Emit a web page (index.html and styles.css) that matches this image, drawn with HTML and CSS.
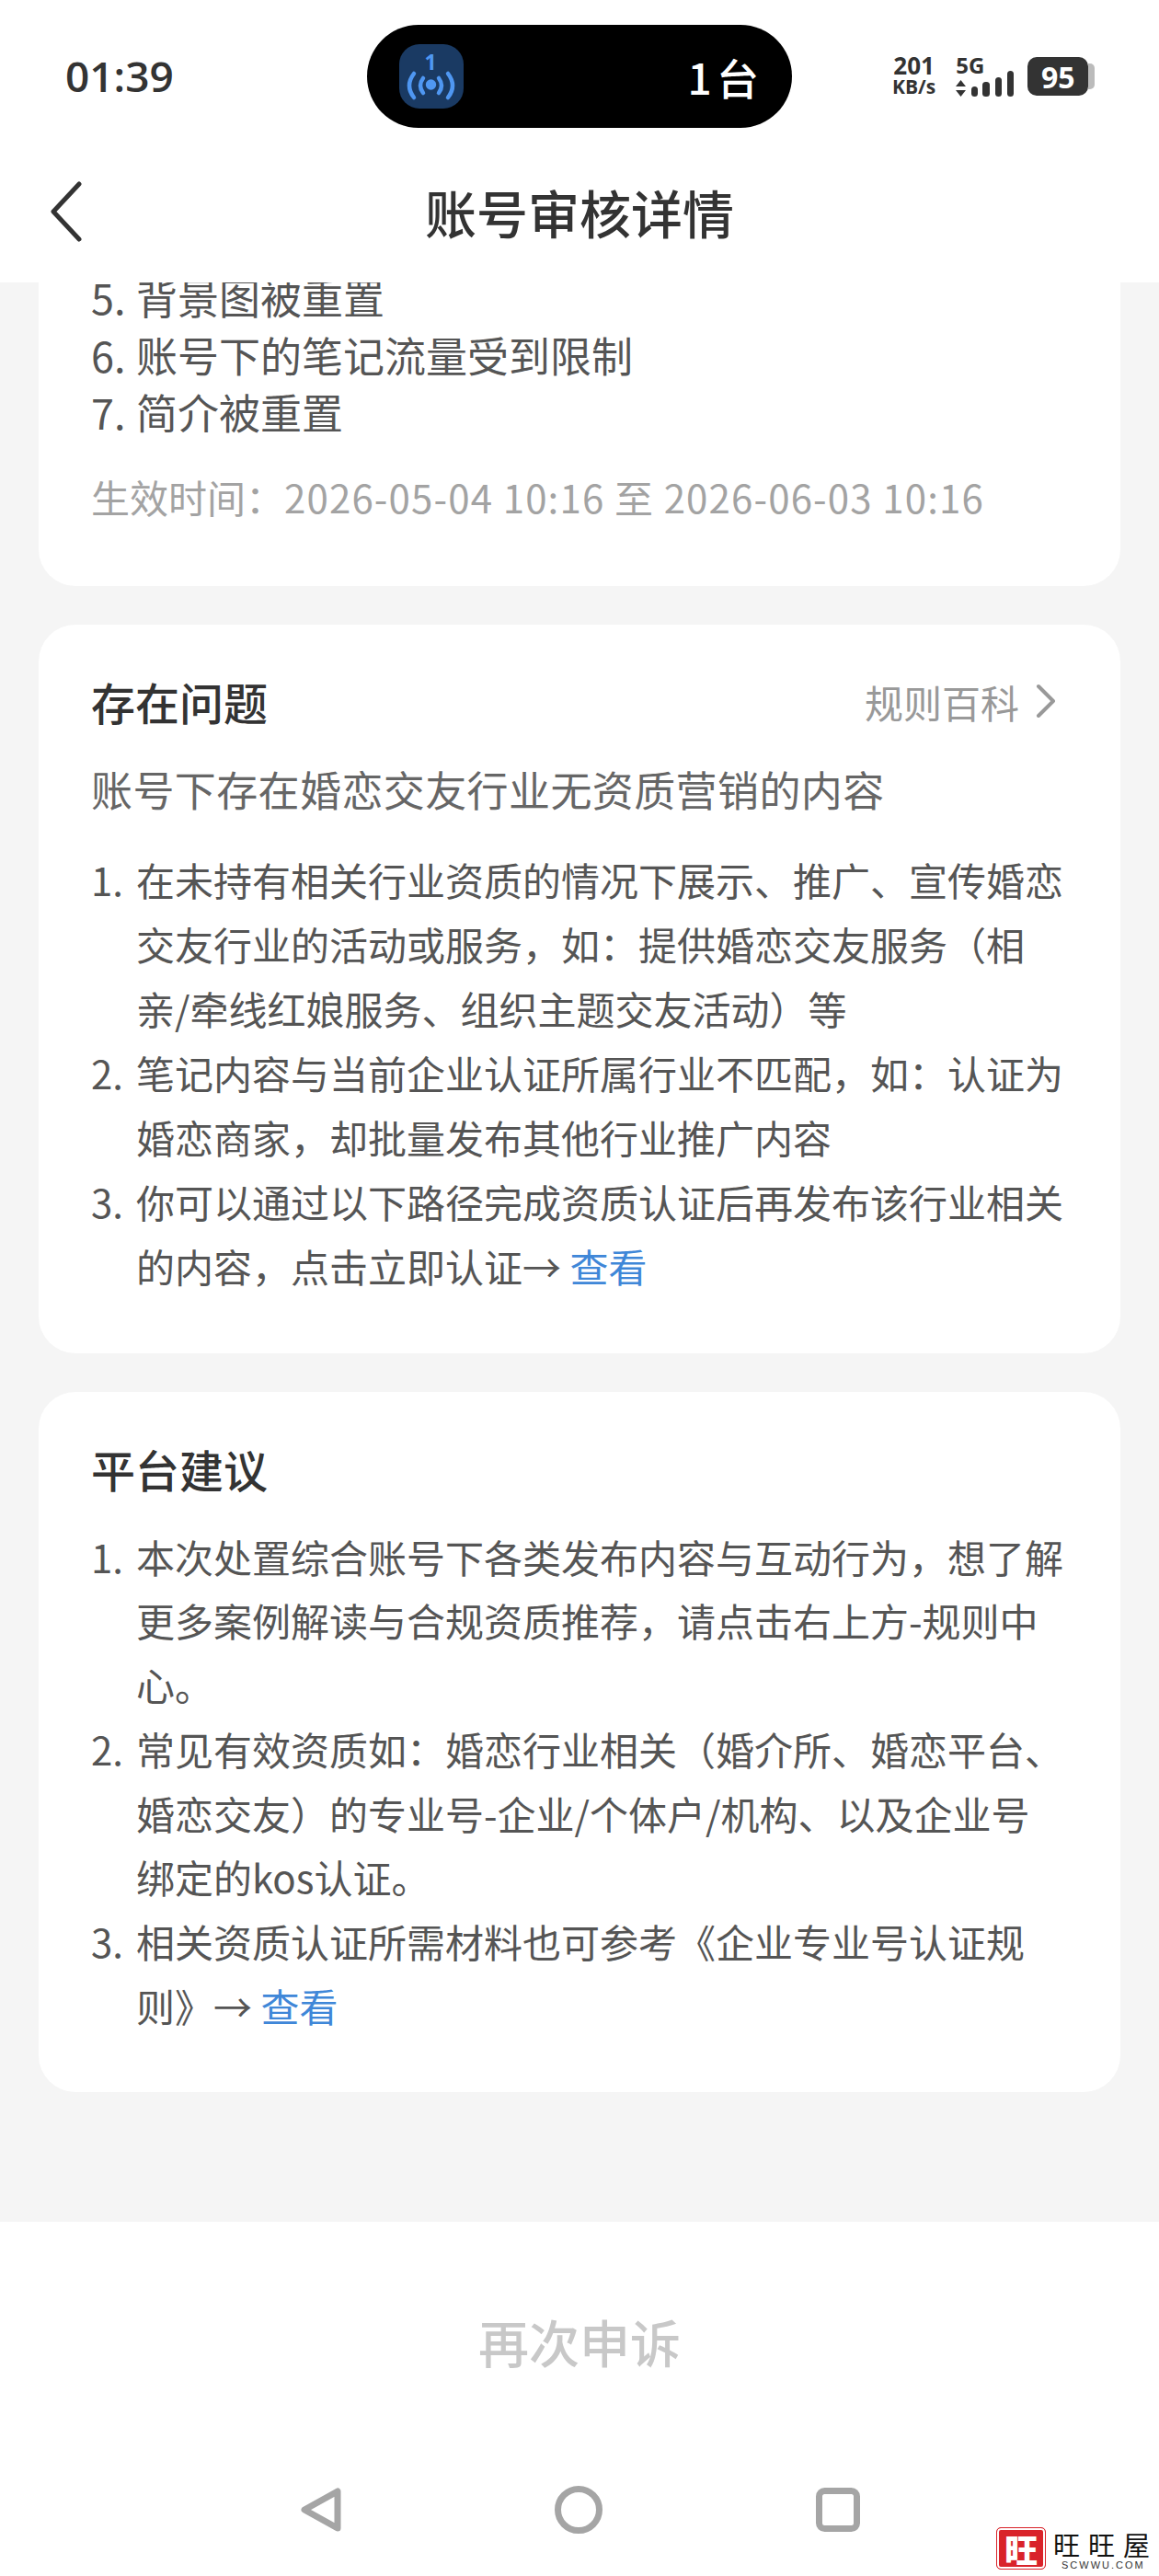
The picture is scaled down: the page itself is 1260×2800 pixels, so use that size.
FILE: index.html
```html
<!DOCTYPE html>
<html lang="zh-CN">
<head>
    <meta charset="UTF-8">
    <meta name="viewport" content="width=device-width, initial-scale=1.0">
    <title>账号审核详情</title>
    <link rel="stylesheet" href="styles.css">
</head>
<body>
<div class="page">

    <header class="topo">
        <div class="status-bar">
            <span class="hora">01:39</span>
            <div class="pilula">
                <span class="pilula-icone">
                    <svg width="70" height="70" viewBox="0 0 70 70" fill="none" stroke="#4f97f2" stroke-width="4.5" stroke-linecap="round">
                        <text x="34" y="28" class="pilula-num" text-anchor="middle">1</text>
                        <circle cx="34.5" cy="44" r="5.7" fill="#4f97f2" stroke="none"/>
                        <path d="M26 37 Q20 45 26 53"/>
                        <path d="M43 37 Q49 45 43 53"/>
                        <path d="M16 32 Q6 45 16 58"/>
                        <path d="M53 32 Q63 45 53 58"/>
                    </svg>
                </span>
                <span class="pilula-texto">1 台</span>
            </div>
            <div class="status-dir">
                <div class="rede">
                    <span class="rede-num">201</span>
                    <span class="rede-un">KB/s</span>
                </div>
                <div class="sinal">
                    <span class="sinal-5g">5G</span>
                    <svg width="64" height="30" viewBox="0 0 64 30" fill="#333">
                        <path d="M0 13 L5.5 6 L11 13 Z"/>
                        <path d="M0 17 L5.5 24 L11 17 Z"/>
                        <rect x="17" y="13" width="7" height="11" rx="3.5"/>
                        <rect x="29" y="8" width="8" height="16" rx="3.5"/>
                        <rect x="43" y="3" width="7" height="21" rx="3.5"/>
                        <rect x="56" y="-4" width="7" height="28" rx="3.5"/>
                    </svg>
                </div>
                <div class="bateria"><span class="bateria-num">95</span></div>
            </div>
        </div>
        <div class="nav">
            <svg class="nav-voltar" width="36" height="66" viewBox="0 0 36 66" fill="none" stroke="#333" stroke-width="5" stroke-linecap="round" stroke-linejoin="round">
                <path d="M32 3 L4 33 L32 63"/>
            </svg>
            <h1 class="nav-titulo">账号审核详情</h1>
        </div>
    </header>

    <main class="conteudo">
        <section class="card card-cortado">
            <ol class="lista lista-curta">
                <li><span class="num">5.</span><span>背景图被重置</span></li>
                <li><span class="num">6.</span><span>账号下的笔记流量受到限制</span></li>
                <li><span class="num">7.</span><span>简介被重置</span></li>
            </ol>
            <p class="vigencia">生效时间：<span class="datas">2026-05-04 10:16 至 2026-06-03 10:16</span></p>
        </section>

        <section class="card">
            <div class="card-topo">
                <h2>存在问题</h2>
                <a class="regras">规则百科
                    <svg width="22" height="38" viewBox="0 0 22 38" fill="none" stroke="#999" stroke-width="4" stroke-linecap="round" stroke-linejoin="round">
                        <path d="M3 3 L19 19 L3 35"/>
                    </svg>
                </a>
            </div>
            <p class="resumo">账号下存在婚恋交友行业无资质营销的内容</p>
            <ol class="lista">
                <li><span class="num">1.</span><span>在未持有相关行业资质的情况下展示、推广、宣传婚恋交友行业的活动或服务，如：提供婚恋交友服务（相亲/牵线红娘服务、组织主题交友活动）等</span></li>
                <li><span class="num">2.</span><span>笔记内容与当前企业认证所属行业不匹配，如：认证为婚恋商家，却批量发布其他行业推广内容</span></li>
                <li><span class="num">3.</span><span>你可以通过以下路径完成资质认证后再发布该行业相关的内容，点击立即认证→ <a class="link">查看</a></span></li>
            </ol>
        </section>

        <section class="card card-sugestao">
            <div class="card-topo">
                <h2>平台建议</h2>
            </div>
            <ol class="lista lista-sugestao">
                <li><span class="num">1.</span><span>本次处置综合账号下各类发布内容与互动行为，想了解更多案例解读与合规资质推荐，请点击右上方-规则中心。</span></li>
                <li><span class="num">2.</span><span>常见有效资质如：婚恋行业相关（婚介所、婚恋平台、婚恋交友）的专业号-企业/个体户/机构、以及企业号绑定的kos认证。</span></li>
                <li><span class="num">3.</span><span>相关资质认证所需材料也可参考《企业专业号认证规则》→ <a class="link">查看</a></span></li>
            </ol>
        </section>
    </main>

    <footer class="rodape">
        <button class="botao">再次申诉</button>
        <div class="nav-sistema">
            <svg width="44" height="48" viewBox="0 0 44 48" fill="none" stroke="#a5a5a5" stroke-width="7" stroke-linejoin="round">
                <path d="M40 4 L40 44 L4 24 Z"/>
            </svg>
            <svg width="52" height="52" viewBox="0 0 52 52" fill="none" stroke="#a5a5a5" stroke-width="7">
                <circle cx="26" cy="26" r="22.5"/>
            </svg>
            <svg width="48" height="48" viewBox="0 0 48 48" fill="none" stroke="#a5a5a5" stroke-width="7">
                <rect x="3.5" y="3.5" width="41" height="41" rx="6"/>
            </svg>
        </div>
    </footer>

    <div class="marca">
        <span class="marca-selo">旺</span>
        <div class="marca-texto">
            <span class="marca-nome">旺旺屋</span>
            <span class="marca-site">SCWWU.COM</span>
        </div>
    </div>
</div>
</body>
</html>
```

FILE: styles.css
```css
/* Base */
body {
    margin: 0;
    background-color: #f5f5f5;
    font-family: "Noto Sans CJK SC", "Noto Sans", sans-serif;
}

.page {
    position: relative;
    width: 1260px;
    height: 2800px;
    display: flex;
    flex-direction: column;
    overflow: hidden;
}

/* Topo */
.topo {
    height: 307px;
    flex-shrink: 0;
    background-color: #fff;
}

.status-bar {
    display: grid;
    grid-template-columns: 1fr auto 1fr;
    align-items: center;
    height: 112px;
    padding: 27px 0 0;
}

.hora {
    padding-left: 71px;
    font-family: "Open Sans", sans-serif;
    font-size: 46px;
    font-weight: 600;
    line-height: 60px;
    margin-top: -3px;
    color: #333;
}

.pilula {
    display: flex;
    align-items: center;
    justify-content: space-between;
    box-sizing: border-box;
    width: 462px;
    height: 112px;
    padding: 0 36px 0 35px;
    border-radius: 56px;
    background-color: #000;
}

.pilula-icone {
    display: block;
    width: 70px;
    height: 70px;
    border-radius: 22px;
    background-color: #1a3a63;
}

.pilula-num {
    font-family: "Open Sans", sans-serif;
    font-size: 23px;
    font-weight: 700;
    fill: #4f97f2;
    stroke: none;
}

.pilula-texto {
    font-size: 46px;
    font-weight: 500;
    word-spacing: -5px;
    color: #fff;
}

.status-dir {
    display: flex;
    align-items: center;
    gap: 18px;
    padding-left: 109px;
}

.rede {
    display: flex;
    flex-direction: column;
    align-items: center;
    font-family: "Open Sans", sans-serif;
    font-weight: 700;
    color: #333;
    line-height: 23px;
}

.rede-num {
    font-size: 26px;
}

.rede-un {
    font-size: 21px;
}

.sinal {
    display: flex;
    flex-direction: column;
    height: 44px;
    width: 64px;
    margin-left: 4px;
    margin-right: -4px;
}

.sinal-5g {
    font-family: "Open Sans", sans-serif;
    font-size: 24px;
    font-weight: 700;
    line-height: 20px;
    color: #333;
}

.sinal svg {
    overflow: visible;
}

.bateria {
    position: relative;
    display: flex;
    align-items: center;
    justify-content: center;
    width: 66px;
    height: 42px;
    border-radius: 10px;
    background-color: #333;
}

.bateria::after {
    content: "";
    position: absolute;
    left: 100%;
    top: 7px;
    width: 7px;
    height: 28px;
    border-radius: 0 5px 5px 0;
    background-color: #bbb;
}

.bateria-num {
    font-family: "Open Sans", sans-serif;
    font-size: 32px;
    font-weight: 700;
    color: #fff;
}

.nav {
    display: flex;
    align-items: center;
    justify-content: center;
    position: relative;
    height: 100px;
    margin-top: 40px;
}

.nav-voltar {
    position: absolute;
    left: 54px;
    top: 18px;
}

.nav-titulo {
    margin: 0;
    font-size: 56px;
    font-weight: 500;
    color: #333;
}

/* Conteudo */
.conteudo {
    flex: 1;
    min-height: 0;
    display: flex;
    flex-direction: column;
    gap: 42px;
    padding: 0 42px;
    overflow: hidden;
}

.card {
    padding: 53px 58px 60px 57px;
    border-radius: 40px;
    background-color: #fff;
}

.card-cortado {
    margin-top: -15px;
    padding-top: 0;
    padding-bottom: 66px;
    border-radius: 0 0 40px 40px;
}

.card-sugestao {
    padding-bottom: 59px;
}

.card-topo {
    display: flex;
    align-items: center;
    justify-content: space-between;
}

.card-topo h2 {
    margin: 0;
    font-size: 48px;
    font-weight: 500;
    line-height: 60px;
    color: #333;
}

.regras {
    display: flex;
    align-items: center;
    gap: 18px;
    padding-right: 12px;
    font-size: 42px;
    color: #999;
}

.resumo {
    margin: 35px 0 33px;
    font-size: 45px;
    letter-spacing: 0.4px;
    line-height: 60px;
    color: #666;
}

.lista {
    margin: 0;
    padding: 0;
    list-style: none;
    font-size: 42px;
    line-height: 70px;
    color: #555;
}

.lista li {
    display: flex;
}

.lista .num {
    flex: 0 0 49px;
}

.lista-curta {
    font-size: 45px;
    line-height: 62.5px;
}

.lista-sugestao {
    margin-top: 31px;
    line-height: 69.8px;
}

.link {
    color: #3f87d8;
}

.vigencia {
    margin: 29px 0 0;
    font-size: 42px;
    line-height: 62px;
    color: #a3a3a3;
}

.datas {
    letter-spacing: 1.15px;
}

/* Rodape */
.rodape {
    display: flex;
    flex-direction: column;
    align-items: center;
    height: 385px;
    flex-shrink: 0;
    background-color: #fff;
}

.botao {
    margin-top: 93px;
    padding: 0;
    border: none;
    background: none;
    font-family: inherit;
    font-size: 55px;
    font-weight: 500;
    line-height: 72px;
    color: #c8c8c8;
}

.nav-sistema {
    display: grid;
    grid-template-columns: 44px 52px 48px;
    justify-content: center;
    column-gap: 232px;
    align-items: center;
    margin-top: 122px;
    margin-left: 2px;
}

/* Marca d'agua */
.marca {
    position: absolute;
    left: 1083px;
    bottom: 7px;
    display: flex;
    gap: 8px;
}

.marca-selo {
    display: flex;
    align-items: center;
    justify-content: center;
    box-sizing: border-box;
    width: 54px;
    height: 46px;
    border: 1px solid #d9232a;
    border-radius: 5px;
    box-shadow: inset 0 0 0 2px #fff;
    background-color: #d9232a;
    font-size: 36px;
    font-weight: 900;
    color: #fff;
}

.marca-texto {
    display: flex;
    flex-direction: column;
    width: 114px;
}

.marca-nome {
    font-size: 29px;
    line-height: 36px;
    letter-spacing: 9px;
    white-space: nowrap;
    color: #111;
}

.marca-site {
    padding-left: 9px;
    font-family: "Liberation Sans", sans-serif;
    font-size: 11px;
    line-height: 10px;
    letter-spacing: 2px;
    color: #333;
}
```
